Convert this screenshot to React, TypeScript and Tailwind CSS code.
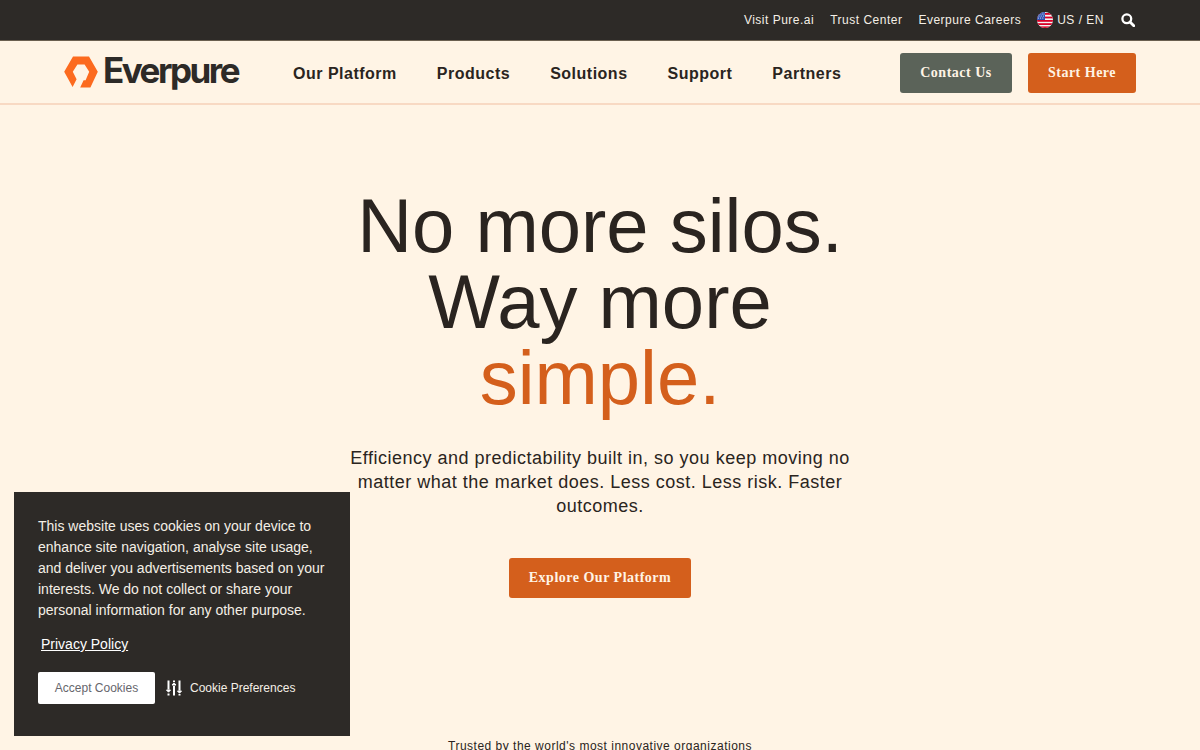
import React from "react";

const sans = "font-['Liberation_Sans',Arial,sans-serif]";
const serif = "font-['Liberation_Serif','Times_New_Roman',serif]";

function Flag() {
  return (
    <svg width="16" height="16" viewBox="0 0 16 16" className="block">
      <defs>
        <clipPath id="flagc"><circle cx="8" cy="8" r="8" /></clipPath>
      </defs>
      <g clipPath="url(#flagc)">
        <rect width="16" height="16" fill="#f4f4f4" />
        <rect y="1" width="16" height="1.8" fill="#d80027" />
        <rect y="4.6" width="16" height="1.8" fill="#d80027" />
        <rect y="8" width="16" height="1.8" fill="#d80027" />
        <rect y="11.2" width="16" height="1.8" fill="#d80027" />
        <rect y="14.4" width="16" height="1.8" fill="#d80027" />
        <rect width="8" height="8" fill="#2e52b2" />
        <g fill="#fff">
          <circle cx="3" cy="2" r=".5" /><circle cx="5.2" cy="2" r=".5" /><circle cx="7" cy="2" r=".5" />
          <circle cx="2" cy="4" r=".5" /><circle cx="4.2" cy="4" r=".5" /><circle cx="6.4" cy="4" r=".5" />
          <circle cx="1.5" cy="6" r=".5" /><circle cx="3.6" cy="6" r=".5" /><circle cx="5.8" cy="6" r=".5" />
        </g>
      </g>
    </svg>
  );
}

function Search() {
  return (
    <svg width="14" height="14" viewBox="0 0 14 14" className="block" fill="none" stroke="#fff">
      <circle cx="5.8" cy="5.8" r="4.4" strokeWidth="2.3" />
      <path d="M9 9l3.8 3.8" strokeWidth="2.8" strokeLinecap="round" />
    </svg>
  );
}

function LogoMark() {
  return (
    <svg width="34" height="32" viewBox="0 0 34 32" className="block">
      <path
        fillRule="evenodd"
        fill="#fc6a1e"
        d="M9 0.5H25L33.8 15.8L26.4 31.5H16.2L19.6 24.2H21.6L25.2 15.8L20.6 8.6H13.4L8.8 15.8L12.6 23.2L8.6 31L0.2 15.8Z"
      />
    </svg>
  );
}

function Sliders() {
  return (
    <svg width="16" height="16" viewBox="0 0 16 16" className="block" fill="none" stroke="#fff" strokeWidth="2">
      <path d="M2.5 0.5v9M8 6v9.5M13.5 0.5v10" />
      <path d="M0.5 10h4l-2 2.2zM6 5h4l-2-2.2zM11.5 11h4l-2 2.2z" fill="#fff" strokeWidth="1" />
      <path d="M2.5 13.5v2M8 0.5v1.5M13.5 14v1.5" />
    </svg>
  );
}

const navItems = ["Our Platform", "Products", "Solutions", "Support", "Partners"];

export default function App() {
  return (
    <div className={`${sans} relative h-[750px] w-[1200px] overflow-hidden bg-[#fff4e5] text-[#2a2420]`}>
      <div className="flex h-[41px] items-center justify-end border-b border-[#6a5f4f] bg-[#2d2a27] pr-[65px] text-[12px] tracking-[0.5px] text-[#f4efe6]">
        <span className="mr-4">Visit Pure.ai</span>
        <span className="mr-4">Trust Center</span>
        <span className="mr-4">Everpure Careers</span>
        <Flag />
        <span className="ml-1 mr-[17px]">US / EN</span>
        <Search />
      </div>

      <header className="flex h-[64px] items-center border-b-2 border-[#f8d9c3] pl-[64px] pr-[64px]">
        <div className="flex w-[229px] items-center">
          <LogoMark />
          <span className="-mt-[3px] ml-[5px] font-['Inter',sans-serif] text-[35px] leading-none font-bold tracking-[-2.5px] text-[#2d2a27]">Everpure</span>
        </div>
        <nav className="mt-1 flex gap-10 text-[16px] font-bold tracking-[0.5px]">
          {navItems.map((n) => (
            <span key={n}>{n}</span>
          ))}
        </nav>
        <div className={`${serif} ml-auto mt-[2px] flex gap-4 text-[14px] font-bold tracking-[0.5px] text-[#fff4e5]`}>
          <span className="flex h-10 w-[112px] items-center justify-center rounded-[3px] bg-[#5b6359] pb-[2px]">Contact Us</span>
          <span className="flex h-10 w-[108px] items-center justify-center rounded-[3px] bg-[#d45f1c] pb-[2px]">Start Here</span>
        </div>
      </header>

      <main className="flex flex-col items-center pt-[83px]">
        <h1 className="text-center text-[76px] leading-[76px] font-normal">
          No more silos.
          <br />
          Way more
          <br />
          <span className="text-[#d45f1c]">simple.</span>
        </h1>
        <p className="mt-[30px] w-[520px] text-center text-[18px] leading-6 tracking-[0.5px]">
          Efficiency and predictability built in, so you keep moving no matter what the market does. Less cost. Less risk. Faster outcomes.
        </p>
        <span className={`${serif} mt-[40px] flex h-10 w-[182px] items-center justify-center rounded-[3px] bg-[#d45f1c] pb-[2px] text-[14px] font-bold tracking-[0.5px] text-[#fff4e5]`}>
          Explore Our Platform
        </span>
        <p className="mt-[140px] text-[12px] leading-4 tracking-[0.5px]">Trusted by the world's most innovative organizations</p>
      </main>

      <aside className="absolute left-[14px] top-[492px] h-[244px] w-[336px] bg-[#2d2a27] pl-6 pt-[24px] text-[#f4efe6]">
        <p className="w-[296px] text-[14px] leading-[21px]">
          This website uses cookies on your device to enhance site navigation, analyse site usage, and deliver you advertisements based on your interests. We do not collect or share your personal information for any other purpose.
        </p>
        <div className="ml-[3px] mt-[13px] text-[14px] leading-[21px] text-white underline">Privacy Policy</div>
        <div className="mt-[17px] flex items-center">
          <span className="flex h-8 w-[117px] items-center justify-center rounded-[2px] bg-white text-[12px] text-[#66666c]">Accept Cookies</span>
          <span className="ml-[11px]"><Sliders /></span>
          <span className="ml-2 text-[12px] text-[#f4efe6]">Cookie Preferences</span>
        </div>
      </aside>
    </div>
  );
}
